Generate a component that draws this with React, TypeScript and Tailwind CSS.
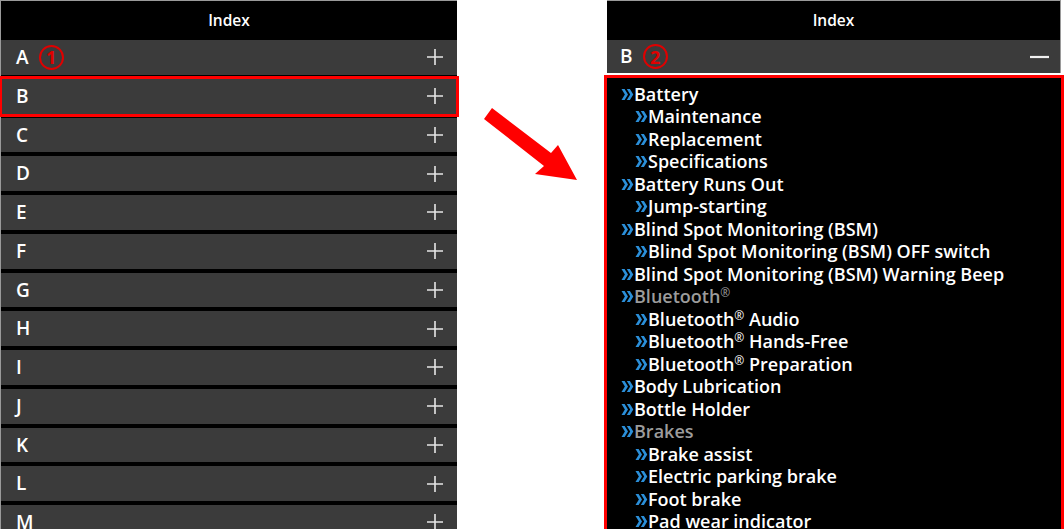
import React from 'react';

const letters = ['A', 'B', 'C', 'D', 'E', 'F', 'G', 'H', 'I', 'J', 'K', 'L', 'M'];

type Entry = { label: string; level: 1 | 2; dim?: boolean; reg?: boolean; rest?: string };

const entries: Entry[] = [
  { label: 'Battery', level: 1 },
  { label: 'Maintenance', level: 2 },
  { label: 'Replacement', level: 2 },
  { label: 'Specifications', level: 2 },
  { label: 'Battery Runs Out', level: 1 },
  { label: 'Jump-starting', level: 2 },
  { label: 'Blind Spot Monitoring (BSM)', level: 1 },
  { label: 'Blind Spot Monitoring (BSM) OFF switch', level: 2 },
  { label: 'Blind Spot Monitoring (BSM) Warning Beep', level: 1 },
  { label: 'Bluetooth', level: 1, dim: true, reg: true },
  { label: 'Bluetooth', level: 2, reg: true, rest: ' Audio' },
  { label: 'Bluetooth', level: 2, reg: true, rest: ' Hands-Free' },
  { label: 'Bluetooth', level: 2, reg: true, rest: ' Preparation' },
  { label: 'Body Lubrication', level: 1 },
  { label: 'Bottle Holder', level: 1 },
  { label: 'Brakes', level: 1, dim: true },
  { label: 'Brake assist', level: 2 },
  { label: 'Electric parking brake', level: 2 },
  { label: 'Foot brake', level: 2 },
  { label: 'Pad wear indicator', level: 2 },
];

const font = { fontFamily: '"Open Sans", "Liberation Sans", sans-serif' };

function Plus() {
  return (
    <svg width="18" height="18" viewBox="0 0 18 18" className="text-[#e6e6e6]">
      <path d="M9 1v16M1 9h16" stroke="currentColor" strokeWidth="1.6" />
    </svg>
  );
}

function Minus() {
  return (
    <svg width="19" height="4" viewBox="0 0 19 4">
      <path d="M0 2h19" stroke="#f0f0f0" strokeWidth="2.2" />
    </svg>
  );
}

// bold double chevron, drawn filled
function Chevron() {
  return (
    <svg width="13" height="13" viewBox="0 0 13 13" className="shrink-0">
      <path d="M0.5 1H3.6L7 6.5L3.6 12H0.5L3.9 6.5Z M5.8 1H8.9L12.3 6.5L8.9 12H5.8L9.2 6.5Z" fill="#2b8fd9" />
    </svg>
  );
}

function Badge({ n }: { n: string }) {
  return (
    <span className="ml-[10px] flex h-[25px] w-[25px] items-center justify-center rounded-full border-2 border-[#e00000] text-[18px] font-bold leading-none text-[#e00000]">
      {n}
    </span>
  );
}

function Header() {
  return (
    <div className="flex h-[39px] shrink-0 items-center justify-center bg-black text-[15.5px] font-semibold text-white">
      Index
    </div>
  );
}

export default function App() {
  return (
    <div className="flex h-[529px] w-[1064px] overflow-hidden bg-white" style={font}>
      {/* left: collapsed list */}
      <div className="flex w-[457px] shrink-0 flex-col border-l border-t border-[#9a9a9a] bg-black">
        <Header />
        <div className="flex flex-col gap-[4px]">
          {letters.map((l) => (
            <div key={l} className="relative shrink-0">
              <div className="flex h-[34.75px] items-center bg-[#3b3b3b] pl-[15px] pr-[13px]">
                <span className="text-[19px] font-semibold text-white">{l}</span>
                {l === 'A' && <Badge n="1" />}
                <span className="ml-auto flex">
                  <Plus />
                </span>
              </div>
              {l === 'B' && (
                <div className="pointer-events-none absolute -bottom-[3px] -left-[2px] -right-[2px] -top-[3px] border-[3px] border-[#f00]" />
              )}
            </div>
          ))}
        </div>
      </div>

      {/* arrow */}
      <div className="flex w-[147px] shrink-0 pl-[26px] pt-[105px]">
        <svg width="96" height="78" viewBox="0 0 96 78">
          <path d="M1 14L9 3L68 48L75 40L94 75L52 69L61 61Z" fill="#f00" />
        </svg>
      </div>

      {/* right: expanded B */}
      <div className="flex w-[460px] shrink-0 flex-col">
        <div className="mx-[3px] shrink-0 border-r border-t border-[#9a9a9a]">
          <Header />
          <div className="flex h-[33px] items-center bg-[#3b3b3b] pl-[13px] pr-[11px]">
            <span className="text-[19px] font-semibold text-white">B</span>
            <Badge n="2" />
            <span className="ml-auto flex">
              <Minus />
            </span>
          </div>
        </div>
        <div className="mt-[2px] flex-1 border-[3px] border-[#f00] bg-black pl-[14px] pt-[5px]">
          {entries.map((e, i) => (
            <div
              key={i}
              className={`flex h-[22.5px] items-center whitespace-nowrap text-[18px] font-semibold ${e.level === 2 ? 'pl-[14px]' : ''} ${e.dim ? 'text-[#9c9c9c]' : 'text-white'}`}
            >
              <Chevron />
              <span>
                {e.label}
                {e.reg && <sup className="text-[12px] font-normal">®</sup>}
                {e.rest}
              </span>
            </div>
          ))}
        </div>
      </div>
    </div>
  );
}
